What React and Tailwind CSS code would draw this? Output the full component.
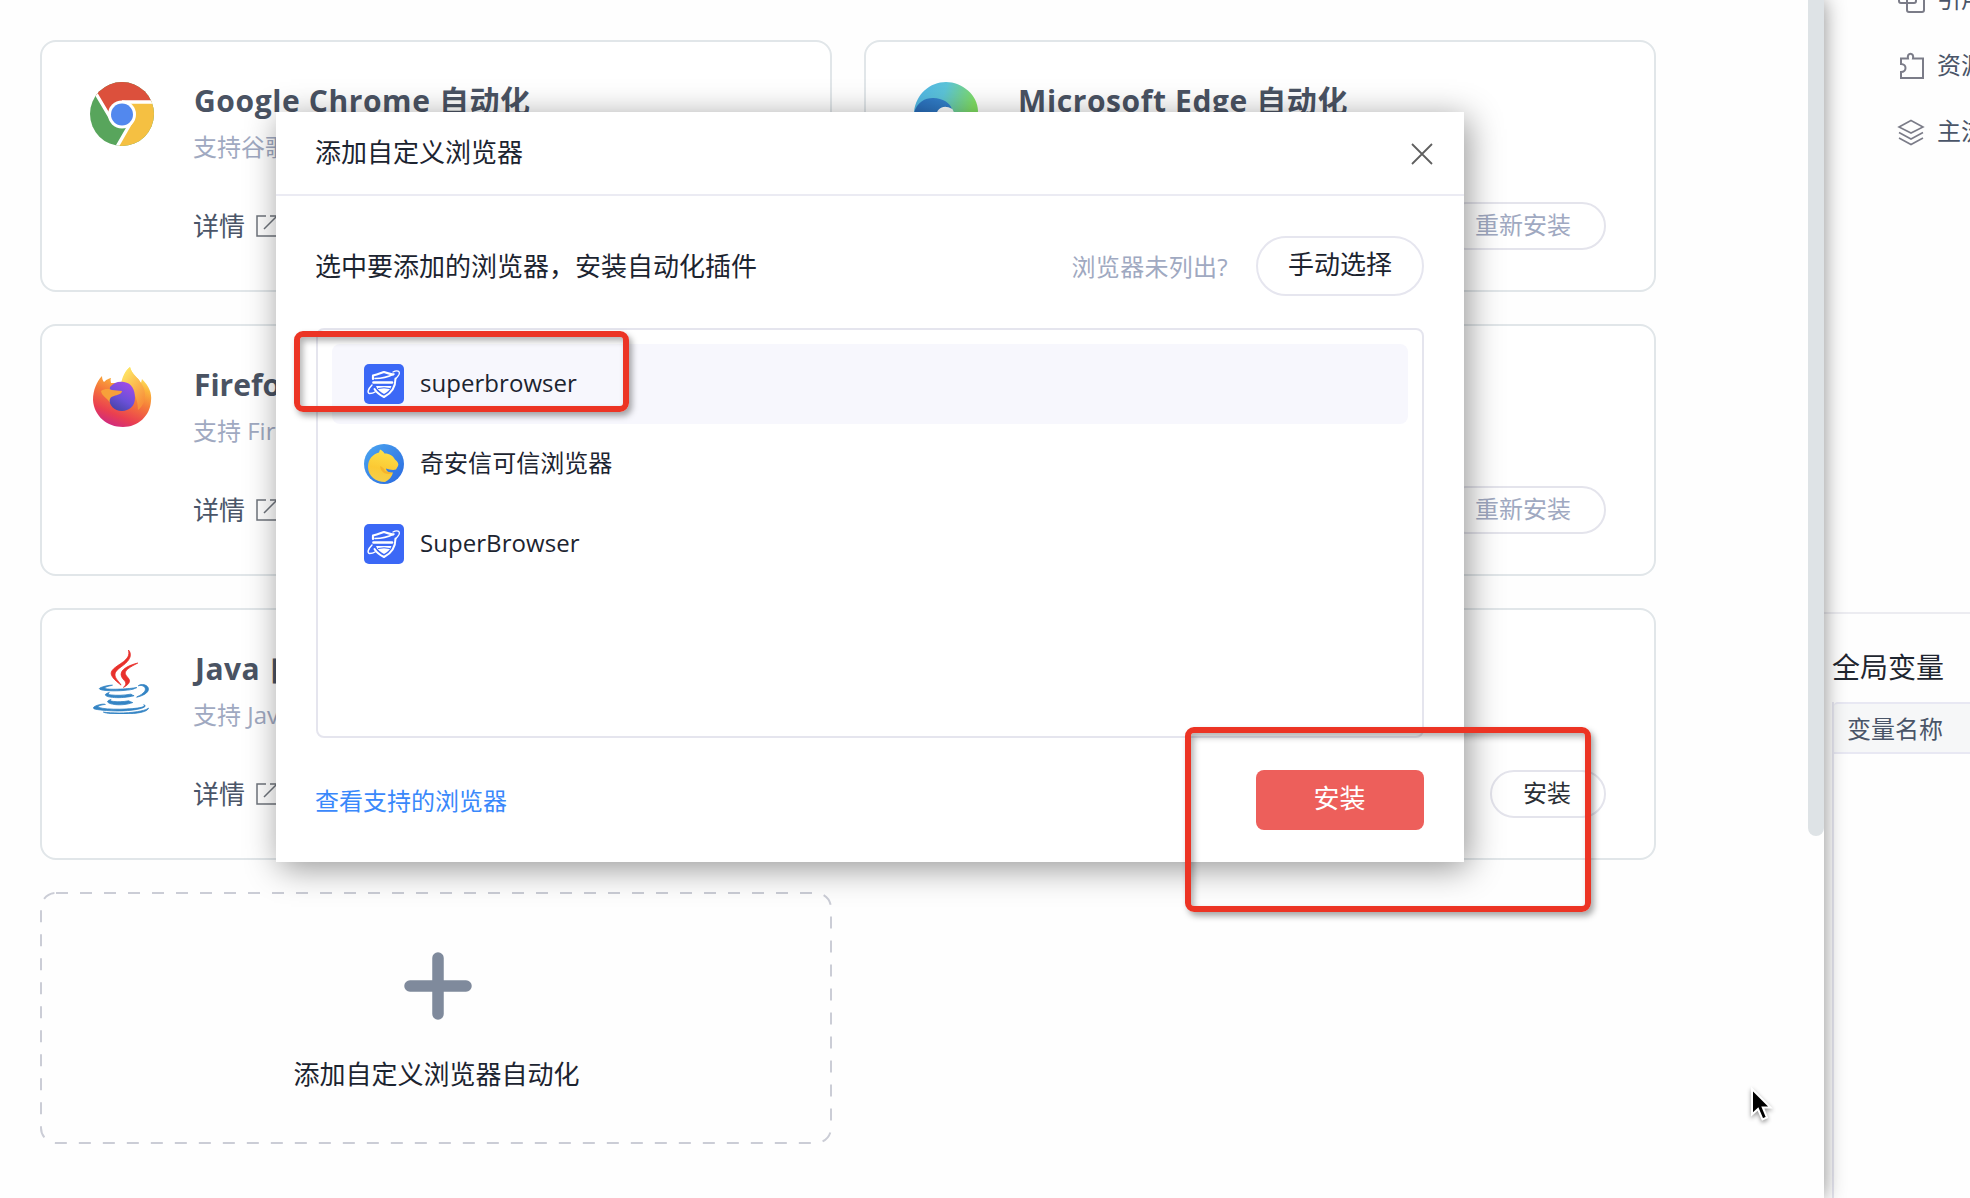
const FONT = "font-['Open_Sans','Noto_Sans_CJK_SC',sans-serif]";

function ChromeIcon() {
  return (
    <svg viewBox="0 0 64 64" className="size-16">
      <clipPath id="chrome-disc"><circle cx="32" cy="32" r="32" /></clipPath>
      <g clipPath="url(#chrome-disc)">
        <rect width="64" height="64" fill="#58a55c" />
        <path d="M32 19H70V-10H-5L-1.8-.5 20.7 38.5 32 32Z" fill="#dc503c" />
        <path d="M32 19H70V70L20.8 77.5 43.3 38.5 32 32Z" fill="#f5c042" />
        <path d="M32 20H70M21.6 38-1.8-1.5M42.4 38 20.8 75.5" stroke="#fff" strokeWidth="3.4" />
      </g>
      <circle cx="32" cy="32.5" r="14" fill="#fff" />
      <circle cx="32" cy="32.5" r="11" fill="#5288ee" />
    </svg>
  );
}

function EdgeIcon() {
  return (
    <svg viewBox="0 0 64 64" className="size-16">
      <defs>
        <linearGradient id="edge-top" x1="0" y1="0" x2="1" y2="0.25">
          <stop offset="0" stopColor="#4fb3e8" />
          <stop offset="0.5" stopColor="#5cc4d8" />
          <stop offset="0.75" stopColor="#6fd09a" />
          <stop offset="1" stopColor="#80df62" />
        </linearGradient>
        <linearGradient id="edge-mid" x1="1" y1="0" x2="0" y2="1">
          <stop offset="0" stopColor="#3a8fd6" />
          <stop offset="1" stopColor="#1e57a8" />
        </linearGradient>
      </defs>
      <path d="M0 30C2 12 16 0 32 0S64 13 64 29C64 40 55 45 47 45 41 45 37 43 38 39 42 33 40 24 32 24Z" fill="url(#edge-top)" />
      <path d="M0 31C3 20 11 16 19 16 29 16 36 21 38 27 30 22 23 26 22 34 21 48 36 57 50 51 56 49 60 48 58 51 40 74 2 64 0 31Z" fill="url(#edge-mid)" />
    </svg>
  );
}

function FirefoxIcon() {
  return (
    <svg viewBox="0 0 64 64" className="size-16">
      <defs>
        <linearGradient id="fx-body" x1="0.75" y1="0.05" x2="0.35" y2="1">
          <stop offset="0" stopColor="#fff36b" />
          <stop offset="0.25" stopColor="#fbb43c" />
          <stop offset="0.5" stopColor="#f5793a" />
          <stop offset="0.8" stopColor="#ea3f50" />
          <stop offset="1" stopColor="#cf2a80" />
        </linearGradient>
        <linearGradient id="fx-globe" x1="0.8" y1="0" x2="0.3" y2="1">
          <stop offset="0" stopColor="#a44bea" />
          <stop offset="0.6" stopColor="#6a50d8" />
          <stop offset="1" stopColor="#4844a8" />
        </linearGradient>
        <linearGradient id="fx-flare" x1="0" y1="0" x2="0.6" y2="1">
          <stop offset="0" stopColor="#fff36b" />
          <stop offset="1" stopColor="#f8903b" />
        </linearGradient>
      </defs>
      <path d="M12 10C12 13 13 15 14 16 17 13 20 12 21 12 20 14 21 16 21 17L32 17C33 10 36 4 40 1 42 9 48 11 51 17L52 13C59 20 62 27 61 35 60 50 48 61 33 61 17 61 4 50 3 34 3 24 7 15 12 10Z" fill="url(#fx-body)" />
      <path d="M31 17C33 9 36 4 40 1 42 9 48 11 51 17 58 27 55 39 48 44 48 34 45 23 31 17Z" fill="url(#fx-flare)" />
      <path d="M20 21C24 16 29 15 34 16 42 17 45 24 45 32 45 40 39 45 32 45 24 45 19 39 19 32Z" fill="url(#fx-globe)" />
      <path d="M11 25C15 22 20 23 22 24L32 25C32 28 27 29 24 30 20 31 19 34 20 37 17 31 12 31 11 25Z" fill="#f7a03a" />
    </svg>
  );
}

function JavaIcon() {
  return (
    <svg viewBox="0 0 384 512" preserveAspectRatio="none" className="h-16 w-[56px]">
      <g strokeWidth="6">
        <path fill="#e8312c" stroke="#e8312c" d="M192.3 280.8c-19-42.7-83.1-80.2 0-145.8C296 53.2 242.8 0 242.8 0c21.5 84.5-75.6 110.1-110.7 162.6-23.9 35.9 11.7 74.4 60.2 118.2zM306.9 104.6c.1 0-175.2 43.8-91.5 140.2 24.7 28.4-6.5 54-6.5 54s62.7-32.4 33.9-72.9c-26.9-37.8-47.5-56.6 64.1-121.3z" />
        <path fill="#3484c4" stroke="#3484c4" d="M277.7 312.9c9.8-6.7 23.4-12.5 23.4-12.5s-38.7 7-77.2 10.2c-47.1 3.9-97.7 4.7-123.1 1.3-60.1-8 33-30.1 33-30.1s-36.1-2.4-80.6 19c-52.5 25.4 130 37 224.5 12.1zM300.8 375.1a12.2 12.2 0 0 1-2 2.6c128.3-33.7 81.1-118.9 19.8-97.3a17.3 17.3 0 0 0-8.2 6.3 70.5 70.5 0 0 1 11-3c31-6.5 75.5 41.5-20.6 91.4zM348 437.4s14.5 11.9-15.9 21.2c-57.9 17.5-240.8 22.8-291.6.7-18.3-7.9 16-19 26.8-21.3 11.2-2.4 17.7-2 17.7-2-20.3-14.3-131.3 28.1-56.4 40.2C232.8 509.4 401 461.3 348 437.4zM124.4 396c-78.7 22 47.9 67.4 148.1 24.5a185.9 185.9 0 0 1-28.2-13.8c-44.7 8.5-65.4 9.1-106 4.5-33.5-3.8-13.9-15.2-13.9-15.2zM304.2 493.2c-78.7 14.8-175.8 13.1-233.3 3.6 0-.1 11.8 9.7 72.4 13.6 92.2 5.9 233.8-3.3 237.1-46.9 0 0-6.4 16.5-76.2 29.7zM260.6 353c-59.2 11.4-93.5 11.1-136.8 6.6-33.5-3.5-11.6-19.7-11.6-19.7-86.8 28.8 48.2 61.4 169.5 25.9a60.4 60.4 0 0 1-21.1-12.8z" />
      </g>
    </svg>
  );
}

function SuperIcon() {
  return (
    <svg viewBox="0 0 40 40" className="size-10 shrink-0">
      <rect width="40" height="40" rx="5" fill="#3b68f6" />
      <g fill="none" stroke="#fff" strokeLinecap="round" strokeLinejoin="round">
        <path d="M9 15V11.500C13 10.500 17 9 20 8 23 9 26 10 29 10.500" strokeWidth="2.200" />
        <path d="M31.500 14.500C31.500 23 28 29 20 33 16 31 12.500 28.500 10.500 25" strokeWidth="2" />
        <path d="M11 14.500C17 14.500 24 13 30 10" strokeWidth="1.600" />
        <path d="M29 8C33 6 36.500 7 35 10.500 34 12.500 33 13.500 31.500 15" strokeWidth="1.300" />
        <path d="M9.500 18.500H28" strokeWidth="2.600" />
        <path d="M8 21C4 25 3 29 5.500 29.500 8 29.500 9.500 29 11 28" strokeWidth="1.500" />
      </g>
      <path d="M12 22H27.500C26 26 23.500 28 20 30 16.500 28 13.500 26 12 22Z" fill="#fff" />
      <path d="M14 24.500 20 23.800 26 24.500" stroke="#3b68f6" strokeWidth="1" fill="none" />
    </svg>
  );
}

function HorseIcon() {
  return (
    <svg viewBox="0 0 40 40" className="size-10 shrink-0">
      <defs>
        <linearGradient id="horse-sky" x1="0" y1="0" x2="1" y2="1">
          <stop offset="0" stopColor="#4ba6f0" />
          <stop offset="1" stopColor="#2a69e0" />
        </linearGradient>
        <linearGradient id="horse-coat" x1="0.6" y1="0" x2="0.4" y2="1">
          <stop offset="0" stopColor="#fde24a" />
          <stop offset="0.6" stopColor="#fbc934" />
          <stop offset="1" stopColor="#f4cf4c" />
        </linearGradient>
      </defs>
      <circle cx="20" cy="20" r="20" fill="url(#horse-sky)" />
      <path d="M16 5.500C18 6 19.500 8 20.500 9.500 26 9.500 29 12 31 15.500 34 18 35 20 34 22L32 25.500C29 26.500 25 25.500 22 24.500 22 27 25 29 29 28.500 28 33 25 36 21 38 12 38 4 32 4 23 4 15 9 10 15 8.500Z" fill="url(#horse-coat)" />
      <path d="M16 22C18 23 20 24 21 27L28 29C24 31 17 30 16 22Z" fill="#f5b32c" />
    </svg>
  );
}

function DetailLink() {
  return (
    <div className="-ml-px flex items-center text-[26px] leading-[32px] text-[#4a5568]">
      <span>详情</span>
      <svg viewBox="0 0 24 24" className="ml-[10px] size-6" fill="none" stroke="#6f747c" strokeWidth="1.500">
        <path d="M11 2H2V22H22V13M9 15 21 3M15 2H22V9" />
      </svg>
    </div>
  );
}

function Card({ icon, title, sub, action, muted, iconClass }) {
  return (
    <div className="flex h-[252px] rounded-2xl border-2 border-[#e1e6e9] bg-white pl-[48px] pr-[48px]">
      <div className={"flex w-[104px] shrink-0 pt-10 " + (iconClass || "")}>{icon}</div>
      <div className="flex flex-1 flex-col pt-[41px]">
        <div className="h-9 whitespace-nowrap text-[30px] font-bold leading-9 text-[#4a5363]">{title}</div>
        <div className="-ml-px mt-[13px] h-[30px] whitespace-nowrap text-[24px] leading-[30px] text-[#a0a9c1]">{sub}</div>
        <div className="mt-10 flex h-12 items-center justify-between">
          {title ? <DetailLink /> : <span />}
          {action && (
            <div className={"flex h-12 items-center rounded-full border-2 border-[#e4e4ec] px-8 pb-[3px] text-[24px] leading-6 " + (muted ? "text-[#a0a9c1]" : "text-[#2b3036]")}>
              <span className="-ml-px mr-px">{action}</span>
            </div>
          )}
        </div>
      </div>
    </div>
  );
}

function Main() {
  return (
    <div className="z-10 flex w-[1824px] shrink-0 bg-[#fefefe] shadow-[0_0_20px_rgba(0,0,0,0.45)]">
      <div className="grid w-[1696px] shrink-0 grid-cols-2 content-start gap-8 p-10">
        <Card icon={<ChromeIcon />} title={<span className="tracking-[0.6px]">Google Chrome 自动化</span>} sub="支持谷歌" />
        <Card icon={<EdgeIcon />} title={<span className="tracking-[0.6px]">Microsoft Edge 自动化</span>} action="重新安装" muted />
        <Card icon={<FirefoxIcon />} title="Firefox" sub="支持 Firefox" />
        <Card action="重新安装" muted />
        <Card icon={<JavaIcon />} iconClass="pl-[3px]" title={<span className="ml-px tracking-[0.5px]">Java 自动化</span>} sub="支持 Java" />
        <Card action="安装" />
        <div className="relative flex h-[252px] flex-col items-center">
          <svg className="absolute inset-0 h-[252px] w-[792px]" fill="none">
            <rect x="1" y="1" width="790" height="250" rx="15" stroke="#cbcdd6" strokeWidth="2" strokeDasharray="12 12" />
          </svg>
          <svg viewBox="0 0 68 68" className="ml-[4px] mt-[60px] size-[68px]" stroke="#7f8a9c" strokeWidth="11.500" strokeLinecap="round">
            <path d="M34 6V62M6 34H62" />
          </svg>
          <div className="ml-px mt-[38px] text-[26px] leading-[32px] text-[#1c2430]">添加自定义浏览器自动化</div>
        </div>
      </div>
      <div className="flex flex-1 justify-end">
        <div className="h-[836px] w-4 rounded-b-full bg-[#dee3e6]" />
      </div>
    </div>
  );
}

function NavItem({ children, label }) {
  return (
    <div className="flex h-[66px] items-center pl-[72px]">
      <svg viewBox="0 0 30 30" className="size-[30px] shrink-0" fill="none" stroke="#7b7c88" strokeWidth="2">{children}</svg>
      <span className="ml-[11px] whitespace-nowrap text-[24px] leading-[30px] text-[#4a5568]">{label}</span>
    </div>
  );
}

function Side() {
  return (
    <div className="flex w-[146px] flex-col overflow-hidden bg-[#fefefe]">
      <div className="-mt-[34px] h-[646px]">
        <NavItem label="引用">
          <rect x="3" y="2" width="17" height="17" rx="2" />
          <rect x="11" y="10" width="17" height="18" rx="2" />
        </NavItem>
        <NavItem label="资源">
          <path d="M5 8.500H12C10.500 2 18.500 2 17 8.500H27V28H5V22C11 22 11 14 5 14Z" />
        </NavItem>
        <NavItem label="主流程">
          <path d="M15 4.500 27 11 15 17 3 11ZM3 16.500 15 23 27 16.500M3 22 15 28.500 27 22" strokeWidth="1.600" />
        </NavItem>
      </div>
      <div className="h-[88px] border-t-2 border-[#ececf1] pl-[8px] pt-[35px] text-[28px] leading-[36px] text-[#1f2630]">全局变量</div>
      <div className="ml-2 mt-[2px] flex-1 border-l-2 border-[#e6e6f0]">
        <div className="h-[52px] whitespace-nowrap rounded-tl border-y-2 border-[#e8e8f3] bg-[#f6f7f8] pl-[13px] text-[24px] leading-[49px] text-[#4a5568]">变量名称</div>
      </div>
    </div>
  );
}

function Row({ icon, label, active }) {
  return (
    <div className={"flex h-20 items-center gap-4 rounded-lg pl-8 " + (active ? "bg-[#f7f7fd]" : "")}>
      {icon}
      <span className="mb-[2px] text-[24px] leading-[30px] tracking-[0.05px] text-[#1c2430]">{label}</span>
    </div>
  );
}

function Dialog() {
  return (
    <div className="absolute left-[276px] top-[112px] z-20 flex h-[750px] w-[1188px] flex-col bg-white shadow-[4px_6px_32px_rgba(0,0,0,0.42)]">
      <div className="flex h-[84px] items-center justify-between border-b-2 border-[#ebebf3] pl-[39px] pr-8 text-[26px] leading-[32px] text-[#1c2430]">
        <span className="mb-[2px]">添加自定义浏览器</span>
        <svg viewBox="0 0 20 20" className="mt-[2px] size-5 overflow-visible" stroke="#5f5f5f" strokeWidth="1.800">
          <path d="M0 0 20 20M20 0 0 20" />
        </svg>
      </div>
      <div className="flex flex-1 flex-col px-10 pt-10">
        <div className="flex h-[60px] items-center">
          <span className="-ml-px flex-1 text-[26px] leading-[32px] text-[#1c2430]">选中要添加的浏览器，安装自动化插件</span>
          <span className="mr-[28px] mt-px text-[24px] leading-[30px] tracking-[0.3px] text-[#a0a9c1]">浏览器未列出?</span>
          <div className="flex h-[60px] w-[168px] items-center justify-center rounded-full border-2 border-[#e6e6ef] pb-1 text-[26px] leading-[32px] text-[#1c2430]">手动选择</div>
        </div>
        <div className="mt-8 h-[410px] rounded-lg border-2 border-[#e5e5ee] p-[14px]">
          <Row active icon={<SuperIcon />} label="superbrowser" />
          <Row icon={<HorseIcon />} label="奇安信可信浏览器" />
          <Row icon={<SuperIcon />} label="SuperBrowser" />
        </div>
        <div className="mt-8 flex h-[60px] items-center justify-between">
          <span className="-ml-px mt-[2px] text-[24px] leading-[30px] text-[#3a88fb]">查看支持的浏览器</span>
          <div className="flex h-[60px] w-[168px] items-center justify-center rounded-lg bg-[#ed5f5b] pb-[4px] pr-px text-[26px] leading-[32px] text-white">安装</div>
        </div>
      </div>
    </div>
  );
}

export default function App() {
  return (
    <div className={"relative flex h-[1198px] w-[1970px] overflow-hidden bg-white " + FONT}>
      <Main />
      <Side />
      <Dialog />
      <div className="absolute left-[294px] top-[331px] z-30 h-[81px] w-[335px] rounded-[9px] border-[6px] border-[#ec3424] shadow-[3px_4px_6px_rgba(0,0,0,0.35),inset_3px_4px_6px_rgba(0,0,0,0.3)]" />
      <div className="absolute left-[1185px] top-[727px] z-30 h-[185px] w-[406px] rounded-[9px] border-[6px] border-[#ec3424] shadow-[3px_4px_6px_rgba(0,0,0,0.35),inset_3px_4px_6px_rgba(0,0,0,0.3)]" />
      <svg viewBox="0 0 24 38" className="absolute left-[1750px] top-[1086px] z-30 h-[38px] w-6 overflow-visible drop-shadow-[0_2px_2px_rgba(0,0,0,0.4)]">
        <path d="M2 3V28.500L8 23 12.500 33.500 17 31.500 12.800 21.500H20.500Z" fill="#000" stroke="#fff" strokeWidth="2" />
      </svg>
    </div>
  );
}
